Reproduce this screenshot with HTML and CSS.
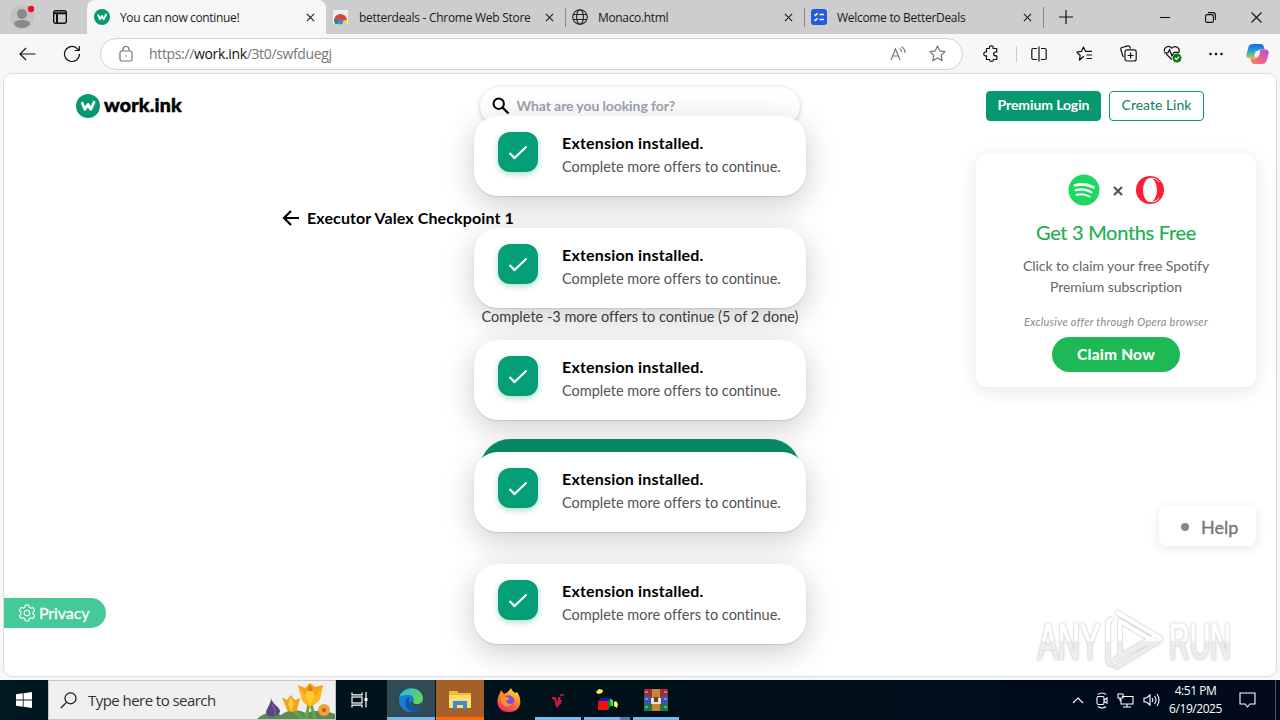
FILE: index.html
```
<!DOCTYPE html>
<html lang="en">
<head>
  <meta charset="UTF-8">
  <meta name="viewport" content="width=device-width, initial-scale=1.0">
  <title>You can now continue!</title>
  <link rel="stylesheet" href="styles.css">
</head>
<body>

  <!-- Tab strip -->
  <div class="tabstrip">
    <div class="tab-tools">
      <svg width="26" height="26" viewBox="0 0 26 26"><circle cx="13" cy="13" r="12" fill="#c4c2c0"/><circle cx="13" cy="10" r="5" fill="#8b8987"/><path d="M5 20c0-3 4-4 8-4s8 1 8 4c-2 3-5 4-8 4s-6-1-8-4z" fill="#8b8987"/><circle cx="22" cy="5" r="3.2" fill="#e81123"/></svg>
      <svg width="16" height="16" viewBox="0 0 16 16" fill="none" stroke="#111" stroke-width="1.4"><rect x="1.7" y="1.7" width="12.6" height="12.6" rx="2"/><path d="M2 4.2h12M5 4v10" stroke-width="2"/></svg>
    </div>
    <div class="tab active">
      <svg class="favicon" viewBox="0 0 24 24"><circle cx="12" cy="12" r="12" fill="#08986f"/><path d="M6.300 9.300l2.600 6 3.100-4.800 2.700 4.800L18 8.300" fill="none" stroke="#fff" stroke-width="2.800" stroke-linejoin="round" stroke-linecap="round"/></svg>
      <span class="tab-title t1">You can now continue!</span>
      <svg class="close" viewBox="0 0 10 10"><path d="M1 1l8 8M9 1l-8 8"/></svg>
    </div>
    <div class="tab">
      <svg class="favicon" viewBox="0 0 16 16"><rect x="0" y="1" width="15" height="14" fill="#eceff1"/><path d="M1 12a6.500 6.500 0 0 1 13-1l-4 1-5 1z" fill="#db4437"/><path d="M1 12l2-3 3 4-1 2H2z" fill="#0f9d58"/><path d="M14 11l-4 1-1 3h5z" fill="#ffcd40"/><circle cx="7.500" cy="13" r="2.500" fill="#4285f4"/></svg>
      <span class="tab-title t2">betterdeals - Chrome Web Store</span>
      <svg class="close" viewBox="0 0 10 10"><path d="M1 1l8 8M9 1l-8 8"/></svg>
    </div>
    <div class="tab divided">
      <svg class="favicon" viewBox="0 0 16 16" fill="none" stroke="#222" stroke-width="1.1"><circle cx="8" cy="8" r="7.300"/><ellipse cx="8" cy="8" rx="3.400" ry="7.300"/><path d="M1.500 5.500h13M1.500 10.500h13"/></svg>
      <span class="tab-title t3">Monaco.html</span>
      <svg class="close" viewBox="0 0 10 10"><path d="M1 1l8 8M9 1l-8 8"/></svg>
    </div>
    <div class="tab divided">
      <svg class="favicon" viewBox="0 0 16 16"><rect width="16" height="16" rx="3" fill="#2459e0"/><path d="M3.500 5.500l1 1 2-2.300M3.500 10.500l1 1 2-2.300M8.500 5.500h4.500M8.500 10.500h4.500" stroke="#fff" stroke-width="1.400" fill="none"/></svg>
      <span class="tab-title t4">Welcome to BetterDeals</span>
      <svg class="close" viewBox="0 0 10 10"><path d="M1 1l8 8M9 1l-8 8"/></svg>
    </div>
    <div class="new-tab">
      <svg width="14" height="14" viewBox="0 0 14 14" stroke="#111" stroke-width="1.2"><path d="M7 0v14M0 7h14"/></svg>
    </div>
    <div class="window-buttons">
      <svg width="10" height="10" viewBox="0 0 10 10"><path d="M0 5.500h10"/></svg>
      <svg width="11" height="11" viewBox="0 0 11 11"><rect x=".6" y="2.600" width="7.800" height="7.800" rx="1.500"/><path d="M3 .6h5a2.400 2.400 0 0 1 2.400 2.400v5"/></svg>
      <svg width="11" height="11" viewBox="0 0 11 11"><path d="M.5.5l10 10M10.500.5l-10 10"/></svg>
    </div>
  </div>

  <!-- Toolbar -->
  <div class="toolbar">
    <svg class="back" width="17" height="14" viewBox="0 0 17 14"><path d="M16.500 7H1M7 1L1 7l6 6"/></svg>
    <svg class="reload" width="18" height="18" viewBox="0 0 18 18"><path d="M16.500 9a7.500 7.500 0 1 1-2.500-5.600L16 5.300M16.300 1v4.500h-4.500"/></svg>
    <div class="address">
      <svg class="grey" width="14" height="16" viewBox="0 0 14 16"><rect x="1" y="5" width="12" height="10" rx="1.800"/><path d="M4 5V3.500a3 3 0 0 1 6 0V5"/><circle cx="7" cy="10" r=".7" fill="#666" stroke="none"/></svg>
      <span class="url">https://<b>work.ink</b>/3t0/swfduegj</span>
      <svg class="grey" width="17" height="15" viewBox="0 0 17 15"><path d="M1 14L5.500 3 10 14M2.700 10h5.700M9.500 2.500c1.500.7 2.200 2 2.200 3.700M11.500.7c2.300 1.200 3.500 3.300 3.500 6.300"/></svg>
      <svg class="grey star" width="17" height="17" viewBox="0 0 17 17"><path d="M8.500 1l2.300 4.900 5.300.7-3.900 3.700 1 5.300-4.700-2.600-4.700 2.600 1-5.300L.9 6.600l5.300-.7z" stroke-linejoin="round"/></svg>
    </div>
    <div class="tools">
      <svg width="17" height="17" viewBox="0 0 17 17"><path d="M3.500 3.500h3C6 1.700 7 .8 8.300.8s2.300.9 1.800 2.700h3.700v3.400c-2 0-3.200.7-3.200 2s1.200 2 3.200 2v3.600h-3.400c.3 1.200-.7 1.900-1.900 1.900s-2.300-.7-1.900-1.900H3.500v-3.600C1.700 11.100.8 10.200.8 8.900s.9-2.200 2.700-2z" stroke-linejoin="round"/></svg>
      <span class="sep"></span>
      <svg width="16" height="16" viewBox="0 0 16 16"><path d="M6 2.500H2.300q-1.500 0-1.500 1.500v8q0 1.500 1.500 1.500H6M10 2.500h3.700q1.500 0 1.500 1.500v8q0 1.500-1.500 1.500H10M8 .5v15"/></svg>
      <svg width="17" height="16" viewBox="0 0 17 16"><path d="M8 10.700l-1 .1-3.600 3.400.8-4.700L.8 6.100l4.600-.7L7.500 1l2.100 4.400H16M10.500 9H16M10.500 12.500H16" stroke-linejoin="round"/></svg>
      <svg width="17" height="17" viewBox="0 0 17 17"><path d="M4 11.500L2.800 11 .8 4.500q-.3-1.400 1-2L8 .8q1.500-.2 2 1.400l.4 1.500"/><rect x="5" y="4.800" width="11.200" height="11.200" rx="2"/><path d="M10.600 7.500v6M7.600 10.500h6"/></svg>
      <svg width="19" height="18" viewBox="0 0 19 18"><path d="M8.800 14.500L3.200 9M1.500 6.500C.4 2.500 5.500-.5 8.800 3.200c3.300-3.700 9-.3 7 4.300M1 7.800h4l1.500-3 2.500 6 2-3.500h5"/><circle cx="14" cy="13" r="4.500" fill="#107c10" stroke="none"/><path d="M11.900 13l1.500 1.500 2.700-2.900" stroke="#fff"/></svg>
      <svg width="14" height="4" viewBox="0 0 14 4"><g fill="#111" stroke="none"><circle cx="1.500" cy="2" r="1.300"/><circle cx="7" cy="2" r="1.300"/><circle cx="12.500" cy="2" r="1.300"/></g></svg>
      <svg class="copilot" width="23" height="22" viewBox="0 0 23 22" stroke="none">
        <defs>
          <linearGradient id="cpA" x1="0" y1="0" x2="0" y2="1"><stop offset="0" stop-color="#1668d8"/><stop offset=".5" stop-color="#22a6d8"/><stop offset="1" stop-color="#d8c52c"/></linearGradient>
          <linearGradient id="cpB" x1="1" y1="0" x2="0" y2="1"><stop offset="0" stop-color="#a050e8"/><stop offset=".5" stop-color="#ed5b9b"/><stop offset="1" stop-color="#fa8a48"/></linearGradient>
        </defs>
        <path d="M7 1h8q2 0 2.700 2.300l1 3.200H14q-2 0-2.600 2L9 15.500H4Q-.6 15.500.5 11l2-7Q3.500 1 7 1z" fill="url(#cpA)"/>
        <path d="M16 21H8q-2 0-2.700-2.300l-.9-3.200H9q2 0 2.600-2L14 6.500h5q4.600 0 3.500 4.500l-2 7q-1 3-4.500 3z" fill="url(#cpB)"/>
        <path d="M9.700 8h4.600l-1.500 5.500H8.100z" fill="#f7f7f7"/>
      </svg>
    </div>
  </div>

  <!-- Page -->
  <div class="page">
    <div class="site-header">
      <div class="logo">
        <svg width="24" height="24" viewBox="0 0 24 24"><circle cx="12" cy="12" r="12" fill="#08986f"/><path d="M6.300 9.300l2.600 6 3.100-4.800 2.700 4.800L18 8.300" fill="none" stroke="#fff" stroke-width="2.800" stroke-linejoin="round" stroke-linecap="round"/></svg>
        <span>work.ink</span>
      </div>
      <div class="search">
        <svg width="18" height="18" viewBox="0 0 18 18" fill="none" stroke="#000" stroke-width="2"><circle cx="6.700" cy="6.700" r="5.200"/><path d="M10.500 10.500L16.500 16.500" stroke-width="2.400"/></svg>
        <span>What are you looking for?</span>
      </div>
      <div class="header-buttons">
        <a class="btn solid">Premium Login</a>
        <a class="btn">Create Link</a>
      </div>
    </div>

    <div class="content">
      <div class="title">
        <svg width="18" height="16" viewBox="0 0 18 16" fill="none" stroke="#000" stroke-width="2.200"><path d="M17 8H2M9 1L2 8l7 7"/></svg>
        <span>Executor Valex Checkpoint 1</span>
      </div>
      <p class="progress">Complete -3 more offers to continue (5 of 2 done)</p>
      <div class="offer-btn"></div>
    </div>

    <div class="toasts" id="toasts"></div>

    <div class="promo">
      <div class="promo-logos">
        <svg width="32" height="32" viewBox="0 0 32 32"><circle cx="16" cy="16" r="15.500" fill="#1ed760"/><g fill="none" stroke="#fff" stroke-linecap="round"><path d="M7 11.300c6-1.700 13-1 18.500 2.100" stroke-width="2.800"/><path d="M7.800 16.200c5.300-1.400 11-.7 15.700 2" stroke-width="2.300"/><path d="M8.500 20.700c4.500-1 9-.5 13.200 1.900" stroke-width="1.900"/></g></svg>
        <svg class="times" width="10" height="10" viewBox="0 0 10 10" stroke="#555" stroke-width="2.200"><path d="M1 1l8 8M9 1L1 9"/></svg>
        <svg width="28" height="28" viewBox="0 0 28 28"><circle cx="14" cy="14" r="14" fill="#fa1e37"/><ellipse cx="14" cy="14" rx="7" ry="12" fill="#fff"/><path d="M15 2.300c3-.5 6 1 8 3.500M15 25.700c3 .5 6-1 8-3.500" stroke="#fff" stroke-width=".9" fill="none"/></svg>
      </div>
      <h3>Get 3 Months Free</h3>
      <p>Click to claim your free Spotify<br>Premium subscription</p>
      <em>Exclusive offer through Opera browser</em>
      <a class="claim">Claim Now</a>
    </div>

    <div class="help"><i></i><span>Help</span></div>

    <div class="privacy">
      <svg width="18" height="18" viewBox="0 0 18 18" fill="none" stroke="#fff" stroke-width="1.100" stroke-linejoin="round"><path d="M7.300 1h3.400l.5 2.300 1.500.9 2.300-.7 1.700 2.900L15 8v2l1.700 1.600-1.700 2.900-2.300-.7-1.500.9-.5 2.300H7.300l-.5-2.300-1.500-.9-2.300.7-1.700-2.900L3 10V8L1.300 6.400 3 3.500l2.300.7 1.500-.9z"/><circle cx="9" cy="9" r="2.800"/></svg>
      <span>Privacy</span>
    </div>

    <svg class="watermark" width="224" height="72" viewBox="0 0 224 72">
      <defs>
        <linearGradient id="wm" gradientUnits="userSpaceOnUse" x1="0" y1="0" x2="0" y2="72"><stop offset=".49" stop-color="#fff"/><stop offset=".49" stop-color="#ededed"/></linearGradient>
      </defs>
      <text x="4" y="53" textLength="62" lengthAdjust="spacingAndGlyphs">ANY</text>
      <text x="135" y="53" textLength="62" lengthAdjust="spacingAndGlyphs">RUN</text>
      <g fill="none" stroke="url(#wm)" stroke-width="4" stroke-linejoin="round"><path d="M79 13q-5 0-5 5v36q0 5 5 5"/><path d="M82 6l44 26-5 4-35-21v34l42-17"/><path d="M80 54l41-24M81 62l46-28"/></g>
    </svg>
  </div>

  <!-- Taskbar -->
  <div class="taskbar">
    <div class="start"><svg width="16" height="16" viewBox="0 0 16 16" fill="#fff"><path d="M0 2.200L6.800 1.300v6.300H0zM7.600 1.200L16 0v7.600H7.600zM0 8.400h6.800v6.300L0 13.800zM7.600 8.400H16V16l-8.400-1.200z"/></svg></div>
    <div class="task-search">
      <svg width="17" height="17" viewBox="0 0 17 17" fill="none" stroke="#111" stroke-width="1.200"><circle cx="10.500" cy="6.300" r="5.500"/><path d="M6.500 10.300L.8 16"/></svg>
      <span>Type here to search</span>
      <svg class="flowers" width="78" height="38" viewBox="0 0 78 38">
        <path d="M0 38c7-7 16-8 24-4 9-7 19-5 25-2 10-4 22-2 29 1v5z" fill="#5b8c50"/>
        <path d="M52 22l-3 16M36 29l10 9M54 23l4 15" stroke="#68a844" stroke-width="3"/>
        <path d="M14 17c1 6 8 8 9 13 0 6-13 8-14 2 0-5 5-8 5-15z" fill="#5b4585"/><path d="M15 23c3 4 4 8 3 12" stroke="#8b70b4" fill="none"/>
        <path d="M25 16l5 3 4-5 4 5 5-2-3 12q-5 4-10 0z" fill="#f4a318"/><path d="M34 16l-3 7 3 8 3-8z" fill="#ffcd36"/>
        <path d="M41 4l7 3 5-5 5 4 8-2-3 14q-10 13-18 1z" fill="#f5a416"/><path d="M53 5l-5 9 5 12 5-12z" fill="#ffcc31"/><path d="M41 4l7 10 4 12-7-7zM66 5l-7 9-7 12 10-6z" fill="#fbb91f"/><path d="M53 3l-3 7h6z" fill="#e87511"/>
        <circle cx="67" cy="29" r="6" fill="#eca13b"/><circle cx="67" cy="29" r="2" fill="#b85620"/>
      </svg>
    </div>
    <div class="app view">
      <svg width="18" height="16" viewBox="0 0 18 16" fill="none" stroke="#fff" stroke-width="1.200"><path d="M1 .5v2.300h10V.5M1 15.500v-2.300h10v2.300M15 0v15.500"/><rect x="1" y="5" width="10" height="6"/><path d="M13.500 6h3v3h-3z" fill="#fff" stroke="none"/></svg>
    </div>
    <div class="app edge">
      <svg width="24" height="24" viewBox="0 0 24 24"><defs><linearGradient id="eg" x1="0" y1="0" x2="1" y2=".4"><stop offset="0" stop-color="#31b4df"/><stop offset="1" stop-color="#60d65a"/></linearGradient></defs><circle cx="12" cy="12" r="12" fill="#1681d4"/><path d="M.2 10C2-1.500 22-4 24 10c0 5-4 7-8 6-2-.5-2.500-1.500-1.500-3 1.500-4-2-6-5-6-4 0-8 0-9.300 3z" fill="url(#eg)"/><path d="M9 9c-5 4-3 13 5 15 4 0 7-2 9-5.500-6 2.500-13-.5-13-6q0-2 1-3z" fill="#1355a3"/><path d="M14.500 13c-1 1.500-.5 2.500 1.500 3 3 .8 6-.2 7.500-2.500l.5 4-1 1.500c-5 1.800-11-.3-12-5z" fill="#314b5b"/></svg>
    </div>
    <div class="app explorer">
      <svg width="22" height="20" viewBox="0 0 22 20"><path d="M0 1h8l2 2h12v15H0z" fill="#f5ba2e"/><path d="M0 5h22v13H0z" fill="#ffdc73"/><path d="M4 19v-8h14v8h-4v-4H8v4z" fill="#3a8dd4"/></svg>
    </div>
    <div class="app">
      <svg width="24" height="24" viewBox="0 0 24 24"><defs><linearGradient id="ff" x1=".8" y1="0" x2=".3" y2="1"><stop offset="0" stop-color="#ffe64a"/><stop offset=".45" stop-color="#ff8a22"/><stop offset="1" stop-color="#f5246b"/></linearGradient></defs><path d="M14 0c1 3 3 4 4 5l2-1c6 8 4 20-8 20C0 24-2 13 3 5l1-3 3 4c3-1 5-3 7-6z" fill="url(#ff)"/><circle cx="11.500" cy="13" r="5.800" fill="#7650e0"/><path d="M4 9c4-1 7 0 9 2l-4 2c1 3 4 4 7 2-2 5-11 5-12-2z" fill="#ff9128"/></svg>
    </div>
    <div class="app running">
      <svg width="14" height="15" viewBox="0 0 14 15" fill="none" stroke="#c91c3e" stroke-width="2.400"><path d="M1 5l3 .5L6 12.500q2-3 2.500-8.500M7 11.500q2-1 3-4.500"/><path d="M9 2.500l4-1" stroke-width="1.500"/></svg>
    </div>
    <div class="app running cube">
      <svg width="23" height="22" viewBox="0 0 23 22"><path d="M0 3l3-3 4 1-1 3-4 1z" fill="#ffff38"/><path d="M2 12l3-3h9l-2 3z" fill="#101cc0"/><path d="M2 12h10v9H2z" fill="#f01010"/><path d="M12 12l3-3v8l-3 4z" fill="#0b852c"/><path d="M14 10l3 1v6h-2z" fill="#45e850"/><path d="M18 13l2-1 2 3-1 4-3-2z" fill="#ffff66"/></svg>
    </div>
    <div class="app running">
      <svg width="24" height="22" viewBox="0 0 24 22"><path d="M0 0h24v7H0z" fill="#a5293c"/><path d="M0 7h24v8H0z" fill="#3558a4"/><path d="M0 15h24v7H0z" fill="#237640"/><path d="M1 3h3M20 3h3M1 10h3M20 10h3M1 18h3M20 18h3" stroke="#e0c3c3"/><path d="M8 0h8v22H8z" fill="#c88635"/><path d="M7 9h10v6H7z" fill="#eee0c4"/><path d="M10 8h4v5h-4z" fill="#6b4320"/></svg>
    </div>
    <div class="tray">
      <svg width="12" height="7" viewBox="0 0 12 7"><path d="M1 6l5-5 5 5"/></svg>
      <svg width="12" height="17" viewBox="0 0 12 17"><rect x="1" y="4.500" width="7" height="8" rx="1.500"/><path d="M8 8l3-2v5L8 9.500M2 2.500q4-3 8 0M2 14.500q4 3 8 0"/></svg>
      <svg width="17" height="15" viewBox="0 0 17 15"><path d="M5 3.500h11v7.500H4V6M10 11v3M6 14h8M1 1h5v4H1zM3 5v3"/></svg>
      <svg width="17" height="14" viewBox="0 0 17 14"><path d="M1 5h2.500L7 2v10L3.500 9H1zM9 5q1.500 2 0 4M11.500 3q3 4 0 8M14 1q4 6 0 12"/></svg>
      <div class="clock"><span>4:51 PM</span><span>6/19/2025</span></div>
      <svg width="17" height="16" viewBox="0 0 17 16"><path d="M1 1h15v11h-5l-2.500 3L6 12H1z"/></svg>
    </div>
  </div>

  <script>
    const toasts = document.getElementById("toasts");

    for (let i = 0; i < 5; i++) {
      const toast = document.createElement("div");
      toast.className = "toast";
      toast.innerHTML = `
        <div class="check"><svg width="20" height="15" viewBox="0 0 20 15"><path d="M1.500 8l5 5L18.500 1.500"/></svg></div>
        <div class="toast-text">
          <strong>Extension installed.</strong>
          <span>Complete more offers to continue.</span>
        </div>`;
      toasts.appendChild(toast);
    }
  </script>
</body>
</html>
```
FILE: styles.css
```
* {
  box-sizing: border-box;
}

body {
  margin: 0;
  width: 1280px;
  height: 720px;
  overflow: hidden;
  background: #f7f7f7;
  font-family: "Open Sans", "Noto Sans", sans-serif;
  display: flex;
  flex-direction: column;
}

svg {
  display: block;
  flex-shrink: 0;
}

/* Tab strip */
.tabstrip {
  height: 34px;
  background: #cdcdcd;
  display: flex;
}

.tab-tools {
  width: 87px;
  display: flex;
  align-items: center;
  gap: 17px;
  padding-left: 9px;
}

.tab {
  width: 239px;
  display: flex;
  align-items: center;
  padding: 0 11px 0 7px;
  position: relative;
  font-size: 12px;
  color: #1b1b1b;
}

.tab.active {
  width: 239px;
  background: #f7f7f7;
  border-radius: 8px 8px 0 0;
}

.tab.divided::before {
  content: "";
  position: absolute;
  left: 0;
  top: 8px;
  width: 1px;
  height: 19px;
  background: #888;
}

.favicon {
  width: 16px;
  height: 16px;
  margin-right: 10px;
}

.tab-title {
  flex: 1;
  white-space: nowrap;
}

.t1 { letter-spacing: -0.35px; }
.t2 { letter-spacing: -0.28px; }
.t3 { letter-spacing: -0.35px; }
.t4 { letter-spacing: -0.3px; }

.close {
  width: 9px;
  height: 9px;
  fill: none;
  stroke: #222;
  stroke-width: 1.3;
}

.new-tab {
  display: flex;
  align-items: center;
  padding-left: 15px;
  border-left: 1px solid transparent;
  border-image: linear-gradient(transparent 8px, #888 8px, #888 27px, transparent 27px) 1;
}

.window-buttons {
  margin-left: auto;
  display: flex;
  align-items: center;
  gap: 35px;
  padding-right: 18px;
  fill: none;
  stroke: #111;
  stroke-width: 1.1;
}

/* Toolbar */
.toolbar {
  height: 39px;
  display: flex;
  align-items: center;
  padding-left: 19px;
  fill: none;
  stroke: #111;
  stroke-width: 1.2;
}

.reload {
  margin: 0 19px 0 27px;
}

.address {
  width: 863px;
  height: 32px;
  background: #fff;
  border: 1px solid #d0d0d0;
  border-radius: 16px;
  display: flex;
  align-items: center;
  padding: 0 16px 0 18px;
}

.grey {
  stroke: #777;
}

.url {
  flex: 1;
  margin-left: 16px;
  font-size: 14px;
  letter-spacing: -0.35px;
  color: #767676;
}

.url b {
  font-weight: 400;
  color: #111;
}

.star {
  margin-left: 22px;
}

.tools {
  flex: 1;
  display: flex;
  align-items: center;
  justify-content: space-between;
  padding: 0 11px 0 20px;
}

.tools svg:nth-child(n+4):nth-child(-n+7) {
  position: relative;
  left: 3px;
}

.sep {
  width: 1px;
  height: 16px;
  margin: 0 -13px 0 -10px;
  background: #ccc;
}

/* Page */
.page {
  height: 604px;
  margin: 0 3px;
  background: #fff;
  border: 1px solid #ddd;
  border-radius: 9px;
  position: relative;
  overflow: hidden;
  font-family: Lato, sans-serif;
  font-variant-ligatures: none;
}

.site-header {
  height: 64px;
  display: flex;
  align-items: center;
  justify-content: space-between;
  padding: 0 72px;
}

.logo {
  width: 230px;
  display: flex;
  align-items: center;
  gap: 4px;
  font-size: 19.5px;
  font-weight: 900;
  line-height: 24px;
  letter-spacing: 0.2px;
  -webkit-text-stroke: 0.5px #000;
}

.logo span {
  padding-bottom: 2px;
}

.search {
  width: 320px;
  height: 38px;
  margin-left: -1px;
  border-radius: 19px;
  display: flex;
  align-items: center;
  gap: 7px;
  padding-left: 12px;
  box-shadow: 0 1px 4px rgba(0, 0, 0, 0.22);
  font-size: 14px;
  font-weight: 700;
  letter-spacing: -0.1px;
  color: #9ca3af;
}

.search span {
  padding-bottom: 2px;
}

.header-buttons {
  width: 230px;
  display: flex;
  justify-content: flex-end;
  gap: 8px;
}

.btn {
  width: 95px;
  height: 30px;
  border: 1px solid #08986f;
  border-radius: 4px;
  line-height: 26px;
  text-align: center;
  font-size: 14px;
  color: #08805e;
}

.btn.solid {
  width: 115px;
  background: #08986f;
  color: #fff;
  font-weight: 700;
  letter-spacing: -0.1px;
}

.content {
  width: 720px;
  margin: 70px auto 0;
}

.title {
  display: flex;
  align-items: center;
  gap: 7px;
  height: 20px;
  padding-left: 2px;
  font-size: 16px;
  font-weight: 700;
  letter-spacing: 0.11px;
}

.title span {
  padding-bottom: 2px;
}

.progress {
  margin: 78px 0 0;
  height: 20px;
  line-height: 21px;
  text-align: center;
  white-space: nowrap;
  font-size: 14.5px;
  color: #444;
}

.offer-btn {
  width: 320px;
  height: 60px;
  margin: 113px auto 0;
  border-radius: 30px;
  background: #08916a;
}

.toasts {
  position: absolute;
  top: 42px;
  left: 470px;
  display: flex;
  flex-direction: column;
  gap: 32px;
}

.toast {
  width: 332px;
  height: 80px;
  background: #fff;
  border-radius: 24px;
  display: flex;
  gap: 24px;
  padding: 16px 24px;
  box-shadow: 0 8px 32px rgba(0, 0, 0, 0.2), 0 1px 2px rgba(0, 0, 0, 0.12);
}

.check {
  width: 40px;
  height: 40px;
  border-radius: 12px;
  background: #059f77;
  display: flex;
  align-items: center;
  justify-content: center;
  box-shadow: 0 2px 6px rgba(5, 159, 119, 0.35);
  fill: none;
  stroke: #fff;
  stroke-width: 2.2;
}

.toast-text {
  display: flex;
  flex-direction: column;
  white-space: nowrap;
}

.toast-text strong {
  font-size: 16px;
  line-height: 22px;
  letter-spacing: 0.19px;
}

.toast-text span {
  font-size: 14.5px;
  line-height: 25px;
  color: #555;
}

/* Spotify promo */
.promo {
  position: absolute;
  top: 80px;
  right: 20px;
  width: 280px;
  height: 233px;
  border-radius: 12px;
  background: #fff;
  box-shadow: 0 4px 20px rgba(0, 0, 0, 0.1);
  display: flex;
  flex-direction: column;
  align-items: center;
  padding-top: 20px;
}

.promo-logos {
  display: flex;
  align-items: center;
  gap: 13px;
}

.times {
  margin-top: 2px;
}

.promo h3 {
  margin: 13px 0 10px;
  font-size: 20px;
  line-height: 26px;
  font-weight: 400;
  letter-spacing: -0.3px;
  -webkit-text-stroke: 0.2px #1fae52;
  color: #1fae52;
}

.promo p {
  margin: 0;
  font-size: 14px;
  line-height: 21px;
  letter-spacing: -0.05px;
  text-align: center;
  color: #666;
}

.promo em {
  margin-top: 17px;
  font-size: 11px;
  line-height: 16px;
  letter-spacing: 0.28px;
  color: #888;
}

.claim {
  width: 128px;
  height: 35px;
  margin-top: 7px;
  border-radius: 18px;
  background: #1db954;
  color: #fff;
  font-size: 15.5px;
  font-weight: 900;
  letter-spacing: 0.2px;
  line-height: 34px;
  text-align: center;
}

.help {
  position: absolute;
  top: 432px;
  right: 20px;
  width: 97px;
  height: 40px;
  border-radius: 8px;
  background: #fff;
  box-shadow: 0 2px 12px rgba(0, 0, 0, 0.1);
  display: flex;
  align-items: center;
  gap: 12px;
  padding: 1px 0 0 22px;
  font-size: 18px;
  color: #757575;
  -webkit-text-stroke: 0.3px #757575;
}

.help i {
  width: 8px;
  height: 8px;
  border-radius: 50%;
  background: #888;
}

.privacy {
  position: absolute;
  top: 524px;
  left: 0;
  width: 102px;
  height: 30px;
  border-radius: 0 15px 15px 0;
  background: #45c997;
  color: #fff;
  display: flex;
  align-items: center;
  gap: 3px;
  padding-left: 14px;
  font-size: 16px;
  letter-spacing: -0.1px;
  -webkit-text-stroke: 0.3px #fff;
}

.privacy span {
  padding-bottom: 2px;
}

.watermark {
  position: absolute;
  top: 532px;
  left: 1030px;
  filter: drop-shadow(0 0 1px rgba(0, 0, 0, 0.3));
}

.watermark text {
  font-family: "Liberation Sans Narrow", "Liberation Sans", sans-serif;
  font-size: 50px;
  fill: url(#wm);
  stroke: url(#wm);
  stroke-width: 1.5;
}

/* Taskbar */
.taskbar {
  height: 40px;
  margin-top: 3px;
  background: linear-gradient(90deg, #001820, #001019 50%, #000a1c);
  display: flex;
}

.start {
  width: 48px;
  display: flex;
  align-items: center;
  justify-content: center;
}

.task-search {
  width: 288px;
  background: #f0f0f0;
  border: 1px solid #c4c4c4;
  display: flex;
  align-items: center;
  gap: 11px;
  padding-left: 11px;
  font-size: 15px;
  color: #333;
}

.task-search span {
  flex: 1;
  white-space: nowrap;
  letter-spacing: -0.55px;
}

.app {
  width: 48px;
  margin-right: 1px;
  display: flex;
  align-items: center;
  justify-content: center;
  border-bottom: 3px solid transparent;
  border-top: 3px solid transparent;
}

.app.view {
  margin-right: 3px;
}

.app.edge {
  background: #314b55;
  border-top-color: #314b55;
  border-bottom-color: #76b9ed;
}

.app.explorer {
  background: #a45f2a;
  border-top-color: #a45f2a;
  border-bottom-color: #ff6a00;
}

.app.running {
  border-image: linear-gradient(90deg, transparent 4px, #76b9ed 4px, #76b9ed 44px, transparent 44px) 3;
  border-top: 0;
  padding-top: 3px;
}

.app.cube {
  border-image-source: linear-gradient(90deg, transparent 4px, #76b9ed 4px, #76b9ed 35px, #4f7fb0 35px, #4f7fb0 44px, transparent 44px);
}

.tray {
  margin-left: auto;
  display: flex;
  align-items: center;
  gap: 9px;
  padding-right: 19px;
  margin-right: 4px;
  border-right: 1px solid #4b5462;
  fill: none;
  stroke: #fff;
  stroke-width: 1.1;
}

.tray svg:first-child {
  margin-right: 3px;
}

.clock {
  width: 53px;
  margin-right: 8px;
  display: flex;
  flex-direction: column;
  align-items: center;
  color: #fff;
  font-size: 12px;
  line-height: 18px;
  letter-spacing: -0.45px;
}
```
